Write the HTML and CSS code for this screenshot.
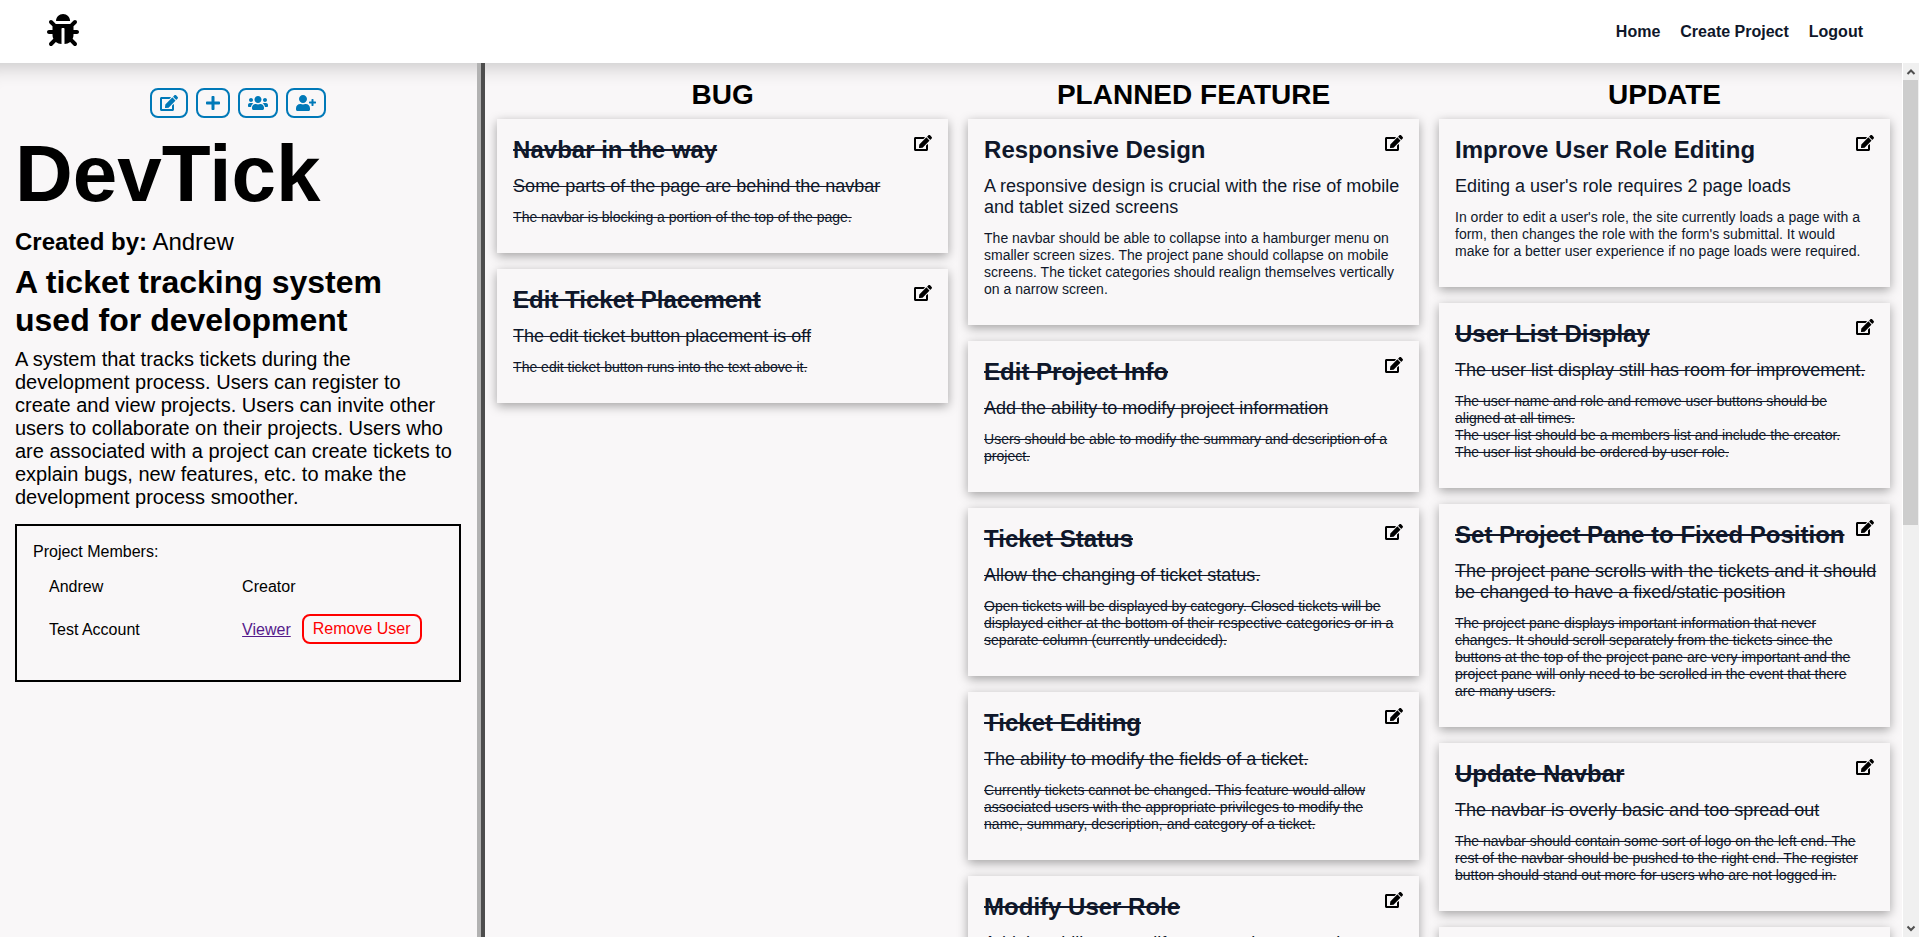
FILE: index.html
```html
<!DOCTYPE html>
<html lang="en">
<head>
<meta charset="utf-8">
<title>DevTick</title>
<link rel="stylesheet" href="styles.css">
</head>
<body>
<svg class="sprite" aria-hidden="true">
  <symbol id="bug" viewBox="0 0 512 512"><path d="M511.988 288.9c-.478 17.43-15.217 31.1-32.653 31.1H424v16c0 21.864-4.882 42.584-13.6 61.145l60.228 60.228c12.496 12.497 12.496 32.758 0 45.255-12.498 12.497-32.759 12.496-45.256 0l-54.736-54.736C345.886 467.965 314.351 480 280 480V236c0-6.627-5.373-12-12-12h-24c-6.627 0-12 5.373-12 12v244c-34.351 0-65.886-12.035-90.636-32.108l-54.736 54.736c-12.498 12.497-32.759 12.496-45.256 0-12.496-12.497-12.496-32.758 0-45.255l60.228-60.228C92.882 378.584 88 357.864 88 336v-16H32.666C15.23 320 .491 306.33.013 288.9-.484 270.816 14.028 256 32 256h56v-58.745l-46.628-46.628c-12.496-12.497-12.496-32.758 0-45.255 12.498-12.497 32.758-12.497 45.256 0L141.255 160h229.489l54.627-54.627c12.498-12.497 32.758-12.497 45.256 0 12.496 12.497 12.496 32.758 0 45.255L424 197.255V256h56c17.972 0 32.484 14.816 31.988 32.9zM257 0c-61.856 0-112 50.144-112 112h224C369 50.144 318.856 0 257 0z"/></symbol>
  <symbol id="edit" viewBox="0 0 576 512"><path d="M402.6 83.2l90.2 90.2c3.8 3.8 3.8 10 0 13.8L274.4 405.6l-92.8 10.3c-12.4 1.4-22.9-9.1-21.5-21.5l10.3-92.8L388.8 83.2c3.8-3.8 10-3.8 13.8 0zm162-22.9l-48.8-48.8c-15.2-15.2-39.9-15.2-55.2 0l-35.4 35.4c-3.8 3.8-3.8 10 0 13.8l90.2 90.2c3.8 3.8 10 3.8 13.8 0l35.4-35.4c15.2-15.3 15.2-40 0-55.2zM384 346.2V448H64V128h229.8c3.2 0 6.2-1.3 8.5-3.5l40-40c7.6-7.6 2.2-20.5-8.5-20.5H48C21.5 64 0 85.5 0 112v352c0 26.5 21.5 48 48 48h352c26.5 0 48-21.5 48-48V306.2c0-10.7-12.9-16-20.5-8.5l-40 40c-2.2 2.3-3.5 5.3-3.5 8.5z"/></symbol>
  <symbol id="plus" viewBox="0 0 448 512"><path d="M416 208H272V64c0-17.67-14.33-32-32-32h-32c-17.67 0-32 14.33-32 32v144H32c-17.67 0-32 14.33-32 32v32c0 17.67 14.33 32 32 32h144v144c0 17.67 14.33 32 32 32h32c17.67 0 32-14.33 32-32V304h144c17.67 0 32-14.33 32-32v-32c0-17.67-14.33-32-32-32z"/></symbol>
  <symbol id="users" viewBox="0 0 640 512"><path d="M96 224c35.3 0 64-28.7 64-64s-28.7-64-64-64-64 28.7-64 64 28.7 64 64 64zm448 0c35.3 0 64-28.7 64-64s-28.7-64-64-64-64 28.7-64 64 28.7 64 64 64zm32 32h-64c-17.6 0-33.5 7.1-45.1 18.6 40.3 22.1 68.9 62 75.1 109.4h66c17.7 0 32-14.3 32-32v-32c0-35.3-28.7-64-64-64zm-256 0c61.9 0 112-50.1 112-112S381.9 32 320 32 208 82.1 208 144s50.1 112 112 112zm76.8 32h-8.3c-20.8 10-43.9 16-68.5 16s-47.6-6-68.5-16h-8.3C179.6 288 128 339.6 128 403.2V432c0 26.5 21.5 48 48 48h288c26.5 0 48-21.5 48-48v-28.8c0-63.6-51.6-115.2-115.2-115.2zm-223.7-13.4C161.5 263.1 145.6 256 128 256H64c-35.3 0-64 28.7-64 64v32c0 17.7 14.3 32 32 32h65.9c6.3-47.4 34.9-87.3 75.2-109.4z"/></symbol>
  <symbol id="user-plus" viewBox="0 0 640 512"><path d="M624 208h-64v-64c0-8.8-7.2-16-16-16h-32c-8.8 0-16 7.2-16 16v64h-64c-8.8 0-16 7.2-16 16v32c0 8.8 7.2 16 16 16h64v64c0 8.8 7.2 16 16 16h32c8.8 0 16-7.2 16-16v-64h64c8.8 0 16-7.2 16-16v-32c0-8.8-7.2-16-16-16zm-400 48c70.7 0 128-57.3 128-128S294.7 0 224 0 96 57.3 96 128s57.3 128 128 128zm89.6 32h-16.7c-22.2 10.2-46.9 16-72.9 16s-50.6-5.8-72.9-16h-16.7C60.2 288 0 348.2 0 422.4V464c0 26.5 21.5 48 48 48h352c26.5 0 48-21.5 48-48v-41.6c0-74.2-60.2-134.4-134.4-134.4z"/></symbol>
</svg>

<nav class="navbar">
  <a class="logo" href="#" aria-label="DevTick home"><svg class="logo-icon"><use href="#bug"/></svg></a>
  <div class="nav-links">
    <a href="#">Home</a>
    <a href="#">Create Project</a>
    <a href="#">Logout</a>
  </div>
</nav>

<div class="workspace">
  <aside class="project">
    <div class="actions">
      <button class="action" type="button" aria-label="Edit project"><svg class="icon-edit"><use href="#edit"/></svg></button>
      <button class="action" type="button" aria-label="Create ticket"><svg class="icon-plus"><use href="#plus"/></svg></button>
      <button class="action" type="button" aria-label="View members"><svg class="icon-wide"><use href="#users"/></svg></button>
      <button class="action" type="button" aria-label="Add member"><svg class="icon-wide"><use href="#user-plus"/></svg></button>
    </div>
    <h1 class="project-name">DevTick</h1>
    <p class="creator"><strong>Created by:</strong> Andrew</p>
    <h2 class="project-summary">A ticket tracking system used for development</h2>
    <p class="project-text">A system that tracks tickets during the development process. Users can register to create and view projects. Users can invite other users to collaborate on their projects. Users who are associated with a project can create tickets to explain bugs, new features, etc. to make the development process smoother.</p>
    <section class="members">
      <p class="members-title" id="members-title">Project Members:</p>
      <table class="members-table" aria-labelledby="members-title">
        <tr><td>Andrew</td><td>Creator</td></tr>
        <tr><td>Test Account</td><td><div class="role"><a href="#">Viewer</a><button class="remove" type="button">Remove User</button></div></td></tr>
      </table>
    </section>
  </aside>

  <main class="board">
    <section class="column">
      <h2 class="column-title">BUG</h2>
      <article class="ticket closed">
        <header class="ticket-head"><h3>Navbar in the way</h3><a href="#" aria-label="Edit ticket"><svg class="icon-edit"><use href="#edit"/></svg></a></header>
        <p class="ticket-summary">Some parts of the page are behind the navbar</p>
        <p class="ticket-text">The navbar is blocking a portion of the top of the page.</p>
      </article>
      <article class="ticket closed">
        <header class="ticket-head"><h3>Edit Ticket Placement</h3><a href="#" aria-label="Edit ticket"><svg class="icon-edit"><use href="#edit"/></svg></a></header>
        <p class="ticket-summary">The edit ticket button placement is off</p>
        <p class="ticket-text">The edit ticket button runs into the text above it.</p>
      </article>
    </section>

    <section class="column">
      <h2 class="column-title">PLANNED FEATURE</h2>
      <article class="ticket">
        <header class="ticket-head"><h3>Responsive Design</h3><a href="#" aria-label="Edit ticket"><svg class="icon-edit"><use href="#edit"/></svg></a></header>
        <p class="ticket-summary">A responsive design is crucial with the rise of mobile and tablet sized screens</p>
        <p class="ticket-text">The navbar should be able to collapse into a hamburger menu on smaller screen sizes. The project pane should collapse on mobile screens. The ticket categories should realign themselves vertically on a narrow screen.</p>
      </article>
      <article class="ticket closed">
        <header class="ticket-head"><h3>Edit Project Info</h3><a href="#" aria-label="Edit ticket"><svg class="icon-edit"><use href="#edit"/></svg></a></header>
        <p class="ticket-summary">Add the ability to modify project information</p>
        <p class="ticket-text">Users should be able to modify the summary and description of a project.</p>
      </article>
      <article class="ticket closed">
        <header class="ticket-head"><h3>Ticket Status</h3><a href="#" aria-label="Edit ticket"><svg class="icon-edit"><use href="#edit"/></svg></a></header>
        <p class="ticket-summary">Allow the changing of ticket status.</p>
        <p class="ticket-text">Open tickets will be displayed by category. Closed tickets will be displayed either at the bottom of their respective categories or in a separate column (currently undecided).</p>
      </article>
      <article class="ticket closed">
        <header class="ticket-head"><h3>Ticket Editing</h3><a href="#" aria-label="Edit ticket"><svg class="icon-edit"><use href="#edit"/></svg></a></header>
        <p class="ticket-summary">The ability to modify the fields of a ticket.</p>
        <p class="ticket-text">Currently tickets cannot be changed. This feature would allow associated users with the appropriate privileges to modify the name, summary, description, and category of a ticket.</p>
      </article>
      <article class="ticket closed">
        <header class="ticket-head"><h3>Modify User Role</h3><a href="#" aria-label="Edit ticket"><svg class="icon-edit"><use href="#edit"/></svg></a></header>
        <p class="ticket-summary">Add the ability to modify a user role on a project</p>
      </article>
    </section>

    <section class="column">
      <h2 class="column-title">UPDATE</h2>
      <article class="ticket">
        <header class="ticket-head"><h3>Improve User Role Editing</h3><a href="#" aria-label="Edit ticket"><svg class="icon-edit"><use href="#edit"/></svg></a></header>
        <p class="ticket-summary">Editing a user's role requires 2 page loads</p>
        <p class="ticket-text">In order to edit a user's role, the site currently loads a page with a form, then changes the role with the form's submittal. It would make for a better user experience if no page loads were required.</p>
      </article>
      <article class="ticket closed">
        <header class="ticket-head"><h3>User List Display</h3><a href="#" aria-label="Edit ticket"><svg class="icon-edit"><use href="#edit"/></svg></a></header>
        <p class="ticket-summary">The user list display still has room for improvement.</p>
        <p class="ticket-text">The user name and role and remove user buttons should be aligned at all times.<br>The user list should be a members list and include the creator.<br>The user list should be ordered by user role.</p>
      </article>
      <article class="ticket closed">
        <header class="ticket-head"><h3>Set Project Pane to Fixed Position</h3><a href="#" aria-label="Edit ticket"><svg class="icon-edit"><use href="#edit"/></svg></a></header>
        <p class="ticket-summary">The project pane scrolls with the tickets and it should be changed to have a fixed/static position</p>
        <p class="ticket-text">The project pane displays important information that never changes. It should scroll separately from the tickets since the buttons at the top of the project pane are very important and the project pane will only need to be scrolled in the event that there are many users.</p>
      </article>
      <article class="ticket closed">
        <header class="ticket-head"><h3>Update Navbar</h3><a href="#" aria-label="Edit ticket"><svg class="icon-edit"><use href="#edit"/></svg></a></header>
        <p class="ticket-summary">The navbar is overly basic and too spread out</p>
        <p class="ticket-text">The navbar should contain some sort of logo on the left end. The rest of the navbar should be pushed to the right end. The register button should stand out more for users who are not logged in.</p>
      </article>
      <article class="ticket closed"></article>
    </section>
  </main>

  <div class="scrollbar" aria-hidden="true">
    <svg class="arrow" viewBox="0 0 16 17"><path d="M4.500 11 8 7.500l3.500 3.500"/></svg>
    <div class="track"><div class="thumb"></div></div>
    <svg class="arrow" viewBox="0 0 16 17"><path d="M4.500 6.500 8 10l3.500-3.500"/></svg>
  </div>
</div>
</body>
</html>
```

FILE: styles.css
```css
* {
  box-sizing: border-box;
  margin: 0;
  padding: 0;
}

body {
  display: flex;
  flex-direction: column;
  height: 100vh;
  overflow: hidden;
  background: #f9f7f8;
  color: #000;
  font: 16px/18px "Liberation Sans", Arial, sans-serif;
}

svg {
  display: block;
  fill: currentColor;
}

.sprite {
  position: absolute;
  width: 0;
  height: 0;
}

/* Navigation */
.navbar {
  display: flex;
  flex: none;
  align-items: center;
  justify-content: space-between;
  height: 63px;
  padding: 0 56px 0 47px;
  background: #fff;
}

.logo {
  padding-bottom: 3px;
  color: #000;
}

.logo-icon {
  width: 32px;
  height: 32px;
}

.nav-links {
  display: flex;
  gap: 20px;
}

.nav-links a {
  color: #0f172a;
  font-weight: bold;
  text-decoration: none;
}

.workspace {
  display: grid;
  flex: 1;
  grid-template-columns: 25.28% minmax(0, 1fr) 17px;
  min-height: 0;
}

/* Project pane */
.project {
  overflow: hidden;
  padding: 25px 20px 16px 15px;
  border-right: 4px solid #4d4d4d;
  box-shadow: inset -4px 0 #b2b2b2, inset 0 24px 20px -20px rgba(0, 0, 0, 0.2);
}

.actions {
  display: flex;
  gap: 8px;
  justify-content: center;
}

.action {
  padding: 5px 8px;
  border: 2px solid #0079b8;
  border-radius: 8px;
  background: none;
  color: #0079b8;
}

.icon-edit {
  width: 18px;
  height: 16px;
}

.icon-plus {
  width: 14px;
  height: 16px;
}

.icon-wide {
  width: 20px;
  height: 16px;
}

.project-name {
  margin-top: 10px;
  font-size: 80px;
  line-height: 92px;
}

.creator {
  margin-top: 8px;
  font-size: 24px;
  line-height: 27px;
}

.project-summary {
  margin-top: 8px;
  font-size: 32px;
  line-height: 38px;
}

.project-text {
  margin-top: 9px;
  font-size: 20px;
  line-height: 23px;
}

.members {
  margin-top: 15px;
  padding: 17px 16px 27px;
  border: 2px solid #000;
}

.members-table {
  width: calc(100% - 16px);
  margin: 7px 0 0 16px;
  border-collapse: collapse;
}

.members-table td {
  width: 49%;
  padding: 9px 0;
  line-height: 19px;
}

.members-table td + td {
  width: 51%;
}

.role {
  display: flex;
  gap: 11px;
  align-items: center;
}

.role a {
  color: #551a8b;
}

.remove {
  padding: 4px 9px;
  border: 2px solid #f00;
  border-radius: 8px;
  background: none;
  color: #f00;
  font: inherit;
  line-height: 18px;
}

/* Ticket board */
.board {
  display: grid;
  grid-template-columns: repeat(3, minmax(0, 1fr));
  gap: 20px;
  align-content: start;
  overflow-y: auto;
  padding: 16px 12px;
  box-shadow: inset 0 24px 20px -20px rgba(0, 0, 0, 0.2);
  scrollbar-width: none;
}

.column {
  display: flex;
  flex-direction: column;
  gap: 16px;
}

.column-title {
  margin-bottom: -8px;
  font-size: 28px;
  line-height: 32px;
  text-align: center;
}

.ticket {
  min-height: 134px;
  padding: 16px 12px 27px 16px;
  background: #f9f7f8;
  box-shadow: 0 3px 10px rgba(0, 0, 0, 0.35);
  color: #0f172a;
}

.ticket-head {
  display: flex;
  gap: 4px;
  align-items: flex-start;
  justify-content: space-between;
  padding-right: 4px;
}

.ticket-head h3 {
  font-size: 24px;
  line-height: 29px;
}

.ticket-head a {
  color: #000;
}

.ticket-summary {
  margin-top: 12px;
  font-size: 18px;
  line-height: 21px;
}

.ticket-text {
  margin-top: 12px;
  padding-right: 10px;
  font-size: 14px;
  line-height: 17px;
}

.closed h3,
.closed p {
  text-decoration: line-through;
}

/* Scrollbar */
.scrollbar {
  display: flex;
  flex-direction: column;
  border-left: 1px solid #fff;
  background: #f0f0f0;
}

.arrow {
  width: 16px;
  height: 17px;
  fill: none;
  stroke: #505050;
  stroke-width: 2;
}

.track {
  flex: 1;
  padding-right: 1px;
}

.thumb {
  height: 53%;
  background: #cdcdcd;
}
```
